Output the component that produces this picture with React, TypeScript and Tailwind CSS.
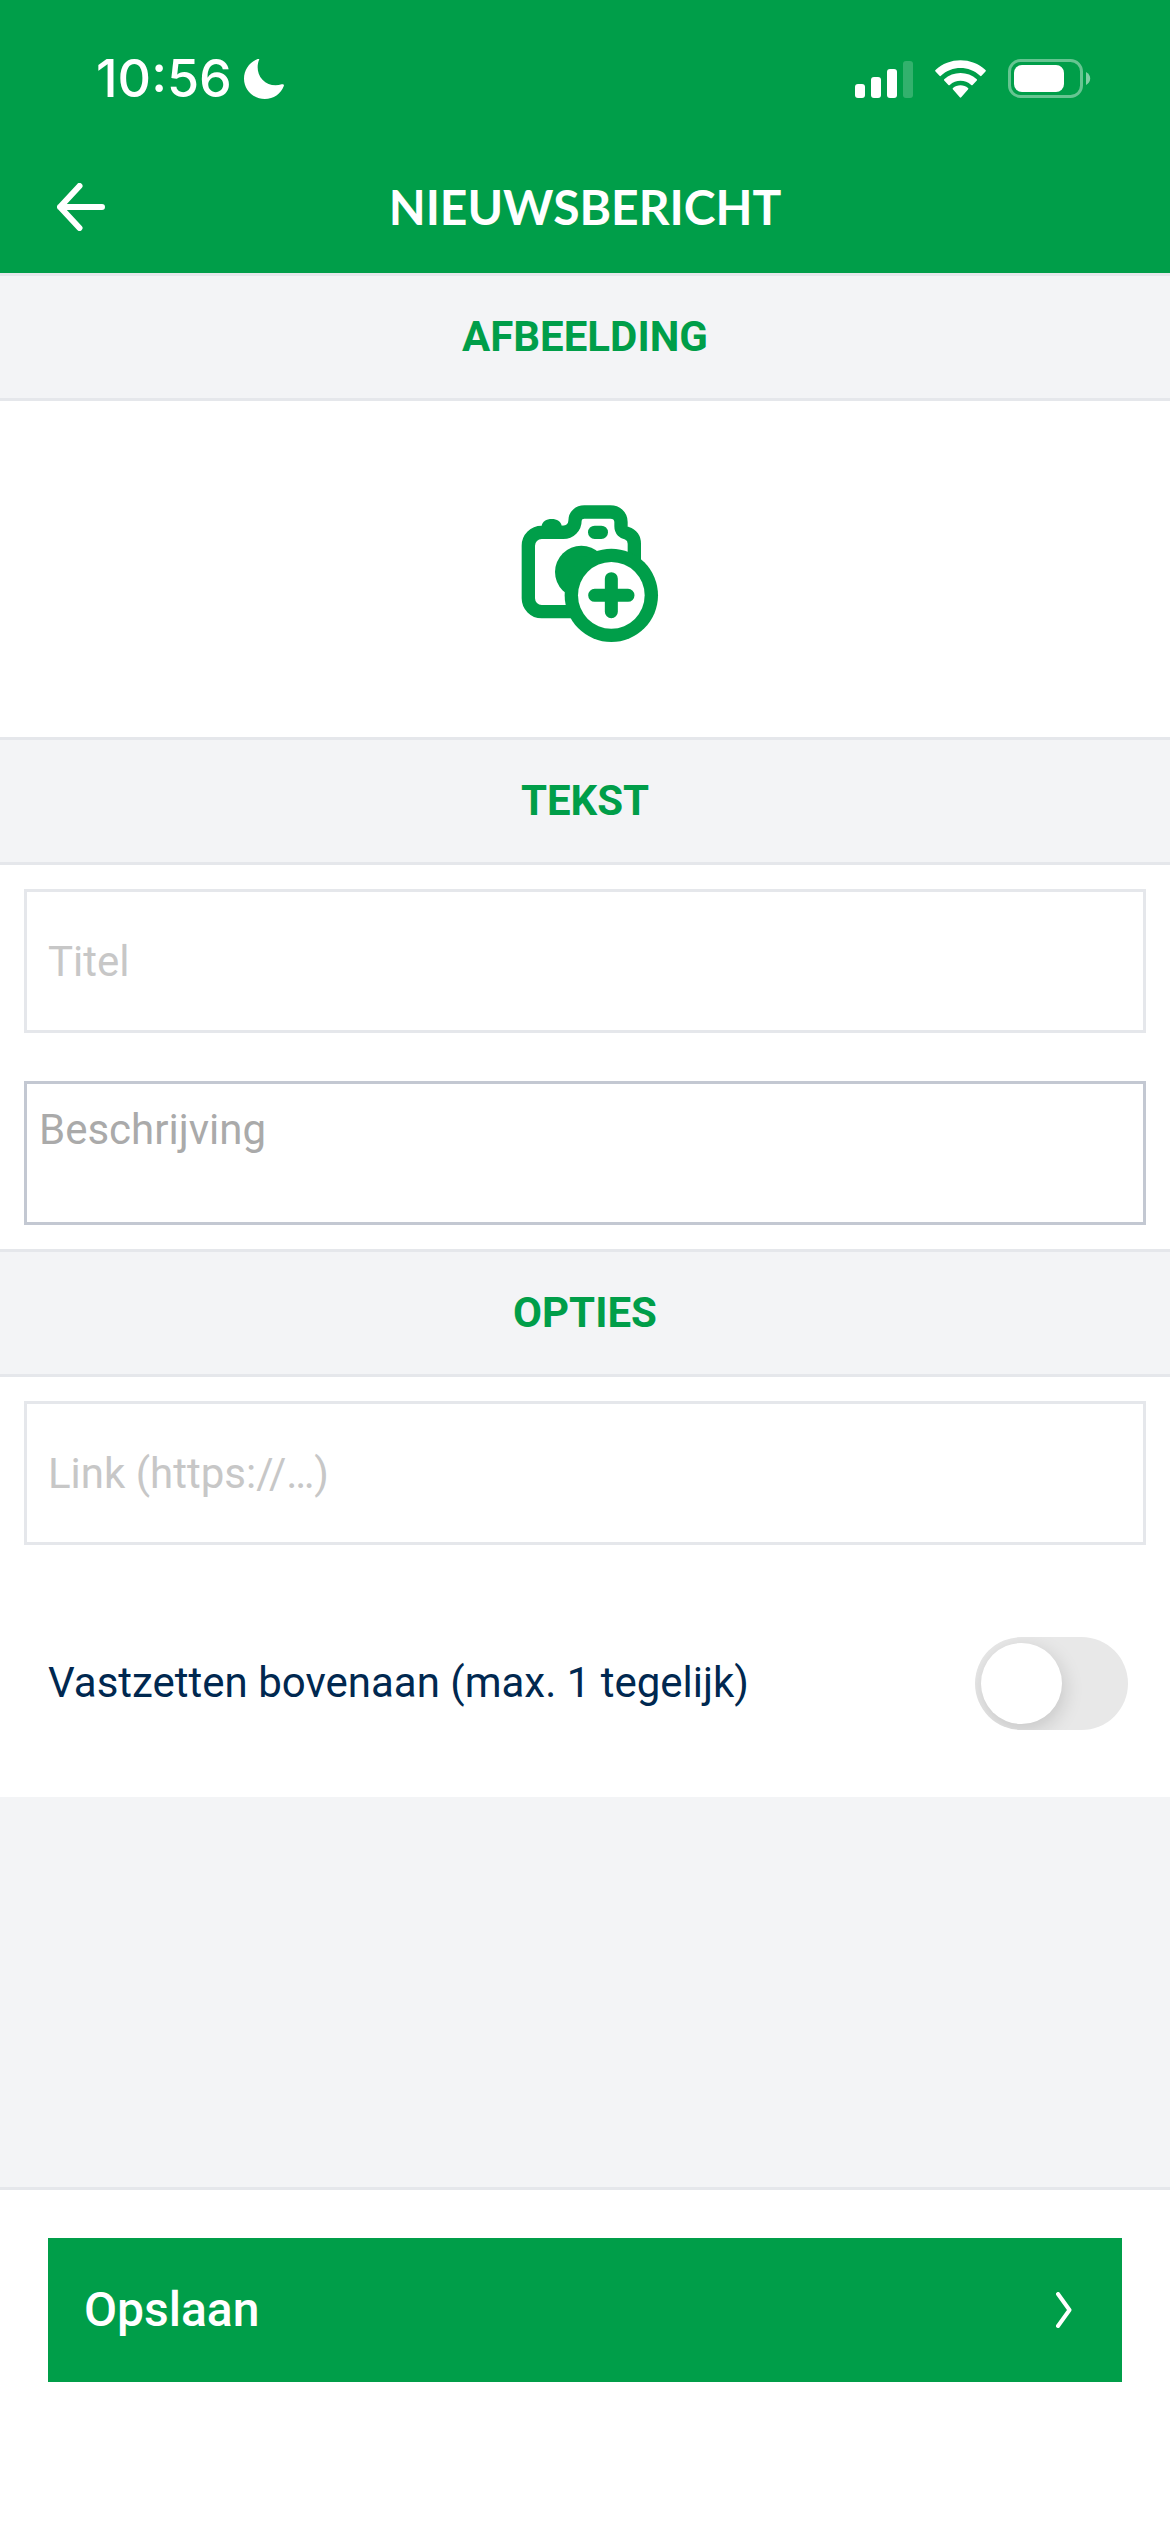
import { useState } from "react";
import type { ReactNode } from "react";

const StatusBar = () => (
  <div className="flex h-[141px] items-center justify-between pt-4 pr-[79px] pl-24">
    <div className="flex items-center gap-3">
      <span className="font-['Inter',sans-serif] text-[52px] leading-none font-medium">
        10:56
      </span>
      <svg width="40" height="40" viewBox="0 0 40 40" fill="currentColor" aria-hidden="true">
        <path d="M15.2.4C12.6 6.5 13 15 18.500 20.700c5 5.200 12.300 7 19.200 4.600 1.500-.5 2.600.3 2.100 1.800C37 35 29.500 40 20.800 40 9.300 40 0 31 0 19.800 0 11 5.300 3.400 13.200.2c1.400-.5 2.400-.6 2 .2Z" />
      </svg>
    </div>
    <div className="flex items-center gap-[22px]">
      <svg width="58" height="38" viewBox="0 0 58 38" fill="currentColor" aria-hidden="true">
        <rect x="0" y="24" width="10" height="14" rx="3" />
        <rect x="16" y="17" width="10" height="21" rx="3" />
        <rect x="32" y="9" width="10" height="29" rx="3" />
        <rect x="48" y="1" width="10" height="37" rx="3" opacity="0.2" />
      </svg>
      <svg width="51" height="38" viewBox="0 0 51 38" fill="currentColor" aria-hidden="true">
        <path d="M.5 11.500a1 1 0 0 1 0-1.400C14-3 37-3 50.500 10.100a1 1 0 0 1 0 1.400l-4 4.300a1 1 0 0 1-1.400 0C34 5.500 17 5.500 5.900 15.800a1 1 0 0 1-1.400 0Z" />
        <path d="M9.200 20.600a1 1 0 0 1 0-1.400c9-8.300 23.600-8.300 32.600 0a1 1 0 0 1 0 1.400l-4.200 4.300a1 1 0 0 1-1.400 0c-6-5.500-15.400-5.500-21.400 0a1 1 0 0 1-1.400 0Z" />
        <path d="M18 29.600a1 1 0 0 1 0-1.500c4-3.700 11-3.700 15 0a1 1 0 0 1 0 1.500l-6.800 7.700a1 1 0 0 1-1.400 0Z" />
      </svg>
      <svg width="83" height="39" viewBox="0 0 83 39" fill="currentColor" aria-hidden="true">
        <rect x="1.500" y="1.500" width="72" height="36" rx="11" fill="none" stroke="currentColor" strokeWidth="3" opacity="0.4" />
        <rect x="6" y="6" width="50" height="27" rx="8" />
        <path d="M78 13c2.600 1.200 4.200 3.700 4.200 6.500S80.600 24.800 78 26Z" opacity="0.5" />
      </svg>
    </div>
  </div>
);

const CameraPlusIcon = () => (
  <svg width="160" height="160" viewBox="45 27 480 480" aria-hidden="true">
    <g fill="none" stroke="currentColor" strokeWidth="40">
      <path d="M260 395H155a40 40 0 0 1-40-40V197a40 40 0 0 1 40-40h65a35 35 0 0 0 35-35c0-16 12-26 28-26h78c18 0 32 12 32 30v13c0 13 8 19 18 21 14 4 22 16 22 31v80" />
    </g>
    <g fill="currentColor">
      <path d="M155 138c2-14 14-21 30-21s28 7 30 21Z" />
      <path d="M205 137h20c8 0 12-4 12-12v30h-32Z" />
      <rect x="294" y="137" width="60" height="40" rx="20" />
      <circle cx="274" cy="276" r="79" />
      <circle cx="364" cy="346" r="140" />
    </g>
    <circle cx="364" cy="346" r="100" fill="#fff" />
    <path d="M364 296v99M314 346h100" stroke="currentColor" strokeWidth="39" strokeLinecap="round" />
  </svg>
);

const SectionTitle = ({ children }: { children: ReactNode }) => (
  <h2 className="flex h-32 items-center justify-center border-y-[3px] border-gray-200 bg-gray-100 text-[42px] leading-none font-bold text-[#009e49]">
    {children}
  </h2>
);

const inputStyle =
  "block h-36 w-full border-[3px] border-gray-200 bg-white px-[21px] text-[42px] text-[#002850] outline-none placeholder:text-[#c7c7c7]";

const App = () => {
  const [pinned, setPinned] = useState(false);

  return (
    <div className="flex min-h-screen flex-col bg-gray-100 font-['Roboto',sans-serif]">
      <header className="bg-[#009e49] text-white">
        <StatusBar />
        <div className="grid h-[132px] grid-cols-[1fr_auto_1fr] items-center px-[57px]">
          <button type="button" aria-label="Terug" className="justify-self-start">
            <svg width="48" height="48" viewBox="0 0 48 48" fill="none" stroke="currentColor" strokeWidth="6" strokeLinecap="round" strokeLinejoin="round" aria-hidden="true">
              <path d="M22.500 3 3 24l19.500 21M3 24h42" />
            </svg>
          </button>
          <h1 className="font-['Lato',sans-serif] text-[48px] leading-none font-bold">
            NIEUWSBERICHT
          </h1>
        </div>
      </header>

      <main>
        <SectionTitle>AFBEELDING</SectionTitle>
        <div className="flex h-[336px] items-center justify-center bg-white">
          <button type="button" aria-label="Afbeelding toevoegen" className="text-[#009e49]">
            <CameraPlusIcon />
          </button>
        </div>

        <SectionTitle>TEKST</SectionTitle>
        <div className="flex flex-col gap-12 bg-white p-6">
          <input type="text" aria-label="Titel" placeholder="Titel" className={inputStyle} />
          <textarea
            aria-label="Beschrijving"
            placeholder="Beschrijving"
            className="block h-36 w-full resize-none border-[3px] border-[#c3c8d2] bg-white px-3 py-5 text-[42px] leading-[52px] text-[#002850] outline-none placeholder:text-[#aaaaaa]"
          />
        </div>

        <SectionTitle>OPTIES</SectionTitle>
        <div className="bg-white pt-6">
          <div className="px-6 pb-6">
            <input type="url" aria-label="Link" placeholder="Link (https://…)" className={inputStyle} />
          </div>
          <div className="flex h-[228px] items-center justify-between pr-[42px] pl-12">
            <label htmlFor="pinned" className="text-[42px] leading-none text-[#002850]">
              Vastzetten bovenaan (max. 1 tegelijk)
            </label>
            <input
              id="pinned"
              type="checkbox"
              role="switch"
              checked={pinned}
              onChange={(e) => setPinned(e.target.checked)}
              className="flex h-[93px] w-[153px] appearance-none items-center overflow-hidden rounded-full bg-[#e8e8e8] px-[6px] before:size-[81px] before:rounded-full before:bg-white before:shadow-[2px_6px_20px_rgba(0,0,0,0.15)] checked:justify-end checked:bg-[#009e49]"
            />
          </div>
        </div>
      </main>

      <footer className="mt-auto border-t-[3px] border-gray-200 bg-white px-12 pt-12 pb-[150px]">
        <button
          type="submit"
          className="flex h-36 w-full items-center justify-between bg-[#009e49] pr-[50px] pl-9 text-5xl font-medium text-white"
        >
          Opslaan
          <svg width="16" height="36" viewBox="0 0 16 36" fill="none" stroke="currentColor" strokeWidth="4" strokeLinecap="round" strokeLinejoin="round" aria-hidden="true">
            <path d="m2 2 11.500 16L2 34" />
          </svg>
        </button>
      </footer>
    </div>
  );
};

export default App;
